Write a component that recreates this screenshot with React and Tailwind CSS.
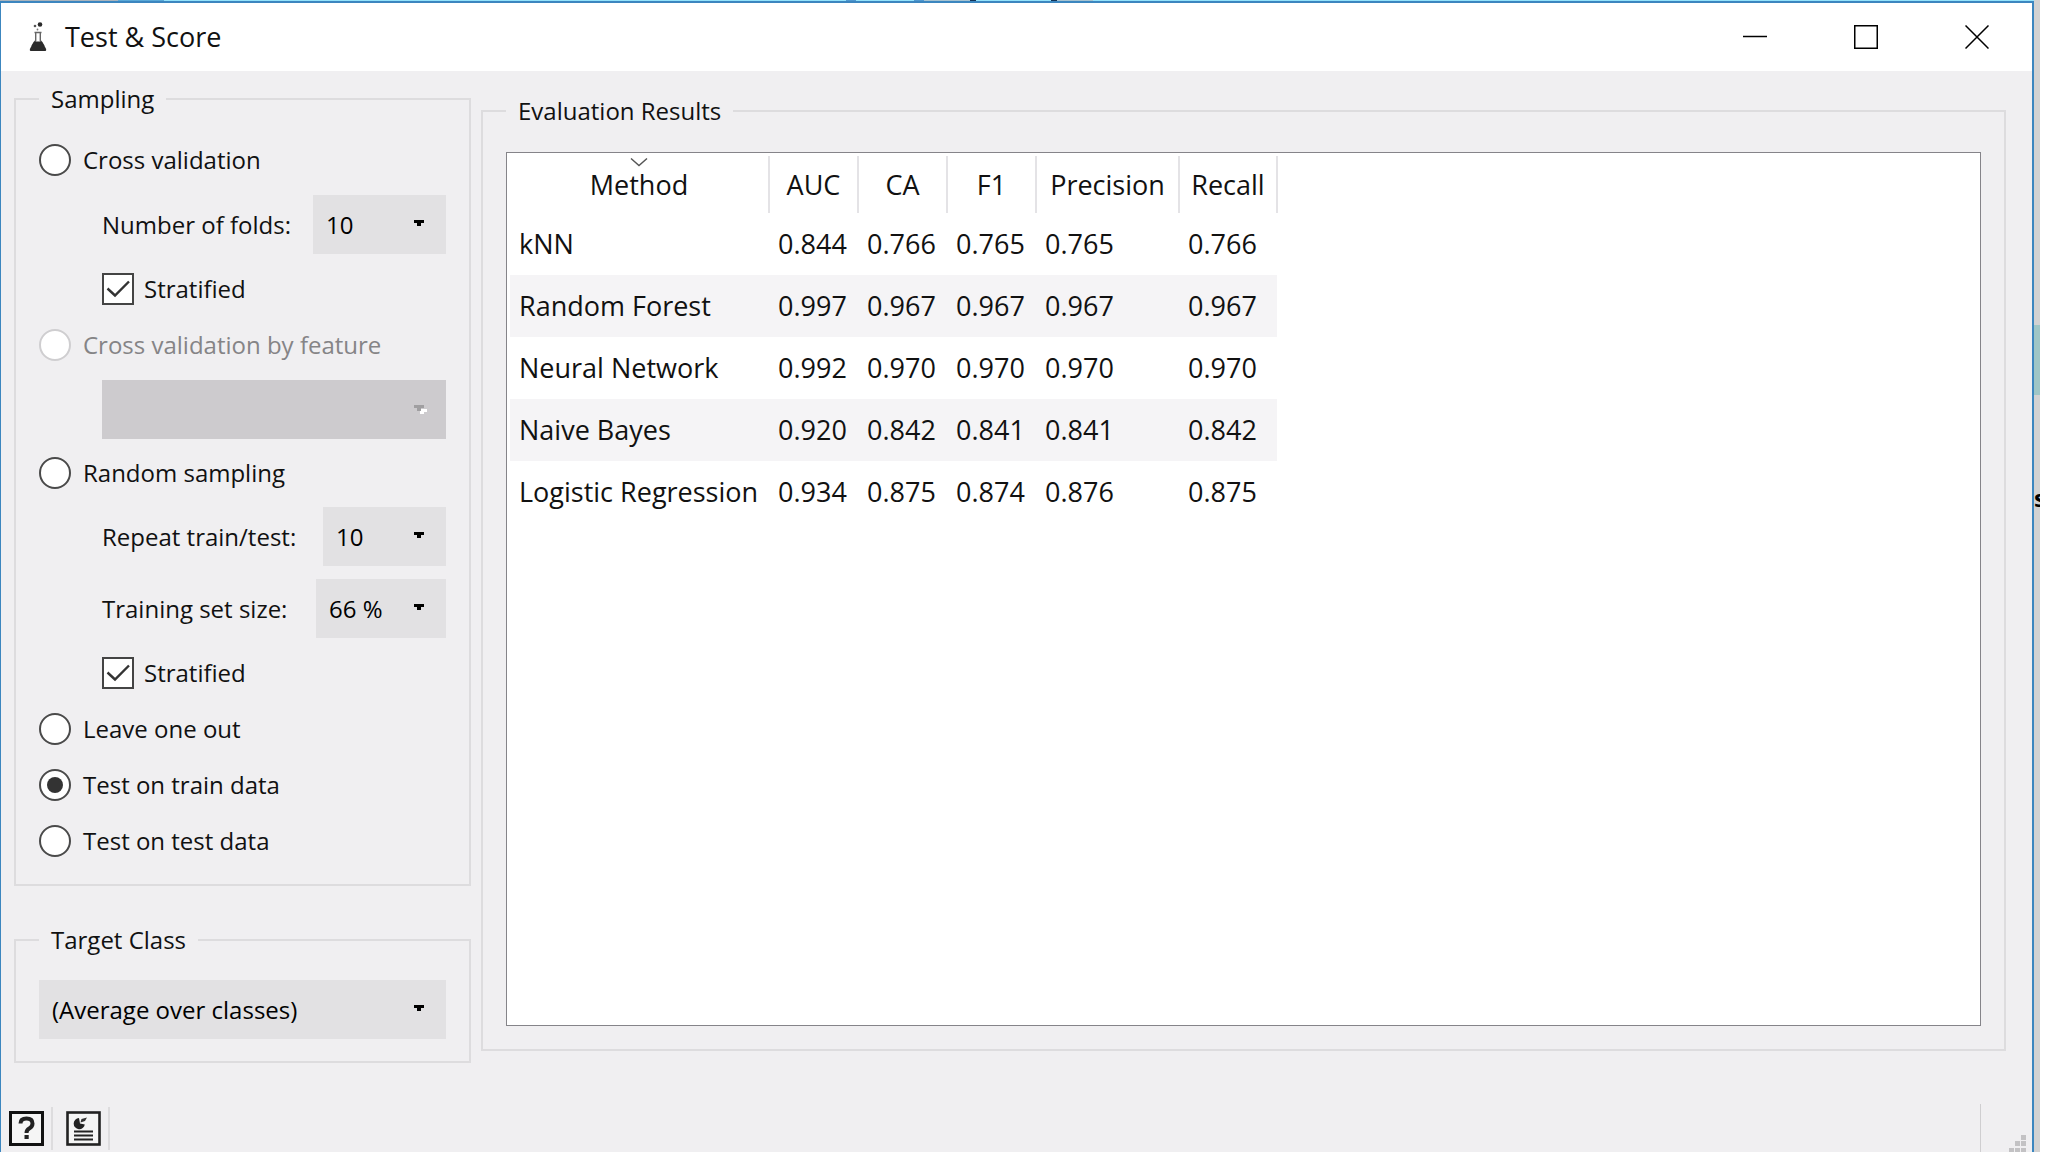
import { useState } from 'react';
import clsx from 'clsx';

const COLUMNS = [
  { key: 'method', label: 'Method', width: 'w-[259px]' },
  { key: 'auc', label: 'AUC', width: 'w-[89px]' },
  { key: 'ca', label: 'CA', width: 'w-[89px]' },
  { key: 'f1', label: 'F1', width: 'w-[89px]' },
  { key: 'precision', label: 'Precision', width: 'w-[143px]' },
  { key: 'recall', label: 'Recall', width: 'w-[98px]' },
];

const RESULTS = [
  { method: 'kNN', auc: '0.844', ca: '0.766', f1: '0.765', precision: '0.765', recall: '0.766' },
  { method: 'Random Forest', auc: '0.997', ca: '0.967', f1: '0.967', precision: '0.967', recall: '0.967' },
  { method: 'Neural Network', auc: '0.992', ca: '0.970', f1: '0.970', precision: '0.970', recall: '0.970' },
  { method: 'Naive Bayes', auc: '0.920', ca: '0.842', f1: '0.841', precision: '0.841', recall: '0.842' },
  { method: 'Logistic Regression', auc: '0.934', ca: '0.875', f1: '0.874', precision: '0.876', recall: '0.875' },
];

// Slice of the desktop that shows above the window
const DESKTOP_EDGE = [
  'w-[118px] bg-[#a9b4bd]',
  'w-[46px] bg-[#5aa9d8]',
  'w-[682px] bg-[#93e2fb]',
  'w-[10px] bg-[#4f97cf]',
  'w-[58px] bg-[#93e2fb]',
  'w-[10px] bg-[#4f97cf]',
  'w-[46px] bg-[#a5c3d2]',
  'w-[6px] bg-[#123458]',
  'w-[75px] bg-[#93e2fb]',
  'w-[6px] bg-[#123458]',
  'w-[36px] bg-[#a5c3d2]',
  'flex-1 bg-[#93e2fb]',
];

function FlaskIcon() {
  return (
    <svg viewBox="0 0 18 30" className="h-[30px] w-[18px]" aria-hidden="true">
      <circle cx="11" cy="2.5" r="2.3" fill="#2b2b2b" />
      <circle cx="6" cy="4" r="1.3" fill="#555" />
      <circle cx="8.5" cy="7.5" r="0.9" fill="#777" />
      <path d="M5.5 10.5h7M6.7 10.5v8L3 24M11.3 10.5v8L15 24" fill="none" stroke="#666" strokeWidth="1.4" />
      <path d="M5 19.5h8l4 7.2q.8 2.3-1.4 2.3H2.4Q.2 29 1 26.7z" fill="#2b2b2b" />
    </svg>
  );
}

function ComboArrow({ disabled }) {
  return (
    <svg
      viewBox="0 0 14 10"
      className="pointer-events-none absolute right-[18px] top-[25px] h-[10px] w-[14px]"
      shapeRendering="crispEdges"
      aria-hidden="true"
    >
      {disabled && <path d="M7 4h6v3h-3v2H6V6h1z" fill="#fff" />}
      <path d="M0 0h10v3H7v3H3V3H0z" fill={disabled ? '#a09fa1' : '#000'} />
    </svg>
  );
}

function Combo({ options, disabled, className, ...props }) {
  return (
    <div className={clsx('relative h-[59px]', className)}>
      <select
        disabled={disabled}
        className="h-full w-full appearance-none overflow-hidden rounded-none bg-[#e2e1e3] pl-[13px] pr-[62px] text-black opacity-100 disabled:bg-[#cdcbce]"
        {...props}
      >
        {options.map((option) => (
          <option key={option}>{option}</option>
        ))}
      </select>
      <ComboArrow disabled={disabled} />
    </div>
  );
}

function Radio({ value, selected, onSelect, disabled, className, children }) {
  return (
    <label className={clsx('flex h-8 items-center gap-3', disabled && 'text-[#858486]', className)}>
      <input
        type="radio"
        name="resampling"
        value={value}
        checked={selected === value}
        onChange={() => onSelect(value)}
        disabled={disabled}
        className="grid size-8 shrink-0 appearance-none place-content-center rounded-full border-2 border-[#4a4a4a] bg-white checked:before:size-4 checked:before:rounded-full checked:before:bg-[#333] disabled:border-[#cfced0]"
      />
      {children}
    </label>
  );
}

function Checkbox({ children }) {
  return (
    <label className="mt-[19px] ml-[63px] flex h-8 items-center gap-[10px]">
      <span className="relative size-8 shrink-0">
        <input
          type="checkbox"
          defaultChecked
          className="peer block size-8 appearance-none border-2 border-[#444] bg-white"
        />
        <svg
          viewBox="0 0 32 32"
          className="pointer-events-none absolute inset-0 hidden size-8 peer-checked:block"
          aria-hidden="true"
        >
          <path d="M5.5 15.5l7.5 7L27 8.5" fill="none" stroke="#333" strokeWidth="2.4" />
        </svg>
      </span>
      {children}
    </label>
  );
}

function GroupBox({ title, className, children }) {
  return (
    <fieldset className={clsx('min-w-0 border-2 border-[#dddcde] px-[23px]', className)}>
      <legend className="px-3 leading-8">{title}</legend>
      {children}
    </fieldset>
  );
}

function SamplingBox() {
  const [sampling, setSampling] = useState('train');

  return (
    <GroupBox title="Sampling" className="pb-[27px]">
      <Radio value="cv" selected={sampling} onSelect={setSampling} className="mt-[29px]">
        Cross validation
      </Radio>
      <div className="mt-[19px] ml-[63px] flex items-center justify-between">
        <label htmlFor="folds">Number of folds:</label>
        <Combo id="folds" options={['10']} className="w-[133px]" />
      </div>
      <Checkbox>Stratified</Checkbox>

      <Radio value="feature" selected={sampling} onSelect={setSampling} disabled className="mt-6">
        Cross validation by feature
      </Radio>
      <Combo options={['']} disabled aria-label="Feature" className="mt-[19px] ml-[63px]" />

      <Radio value="random" selected={sampling} onSelect={setSampling} className="mt-[18px]">
        Random sampling
      </Radio>
      <div className="mt-[18px] ml-[63px] flex items-center justify-between">
        <label htmlFor="repeat">Repeat train/test:</label>
        <Combo id="repeat" options={['10']} className="w-[123px]" />
      </div>
      <div className="mt-[13px] ml-[63px] flex items-center justify-between">
        <label htmlFor="size">Training set size:</label>
        <Combo id="size" options={['66 %']} className="w-[130px]" />
      </div>
      <Checkbox>Stratified</Checkbox>

      <Radio value="loo" selected={sampling} onSelect={setSampling} className="mt-6">
        Leave one out
      </Radio>
      <Radio value="train" selected={sampling} onSelect={setSampling} className="mt-6">
        Test on train data
      </Radio>
      <Radio value="test" selected={sampling} onSelect={setSampling} className="mt-6">
        Test on test data
      </Radio>
    </GroupBox>
  );
}

function ResultsTable() {
  return (
    <table className="table-fixed border-collapse text-[27px] text-[#111]">
      <thead>
        <tr className="h-[57px]">
          {COLUMNS.map(({ key, label, width }) => (
            <th key={key} scope="col" className={clsx('relative border-r-2 border-[#e4e3e6] p-0 font-normal', width)}>
              {key === 'method' && (
                <svg
                  viewBox="0 0 18 9"
                  className="absolute left-1/2 top-[2px] h-[9px] w-[18px] -translate-x-1/2"
                  aria-hidden="true"
                >
                  <path d="M1 .5l8 7 8-7" fill="none" stroke="#555" strokeWidth="1.4" />
                </svg>
              )}
              {label}
            </th>
          ))}
        </tr>
      </thead>
      <tbody>
        {RESULTS.map((row) => (
          <tr key={row.method} className="h-[62px] even:bg-[#f5f4f6]">
            {COLUMNS.map(({ key }) => (
              <td key={key} className="whitespace-nowrap p-0 pl-[9px]">
                {row[key]}
              </td>
            ))}
          </tr>
        ))}
      </tbody>
    </table>
  );
}

function TitleBar() {
  return (
    <header className="flex h-[68px] items-stretch bg-white">
      <div className="flex flex-1 items-center gap-[18px] pl-7">
        <FlaskIcon />
        <h1 className="text-[27px]">Test &amp; Score</h1>
      </div>
      <button aria-label="Minimize" className="grid w-[111px] place-items-center">
        <svg viewBox="0 0 24 24" className="size-6">
          <path d="M0 11.5h24" stroke="#000" strokeWidth="1.5" />
        </svg>
      </button>
      <button aria-label="Maximize" className="grid w-[111px] place-items-center">
        <svg viewBox="0 0 24 24" className="size-6">
          <path d="M.75.75h22.5v22.5H.75z" fill="none" stroke="#000" strokeWidth="1.5" />
        </svg>
      </button>
      <button aria-label="Close" className="grid w-[111px] place-items-center">
        <svg viewBox="0 0 24 24" className="size-6">
          <path d="M.5.5l23 23M23.5.5l-23 23" stroke="#000" strokeWidth="1.5" />
        </svg>
      </button>
    </header>
  );
}

function StatusBar() {
  return (
    <footer className="flex h-[50px] items-center">
      <button aria-label="Help" className="ml-2 size-[35px]">
        <svg viewBox="0 0 35 35" className="size-full">
          <rect x="1.5" y="1.5" width="32" height="32" fill="#f5f5f5" stroke="#111" strokeWidth="3" />
          <path d="M11.5 12.5q0-5 6-5t6 5q0 3-3 4.8-3 1.7-3 4.7" fill="none" stroke="#222" strokeWidth="4" />
          <path d="M15.5 24h4.2v4h-4.2z" fill="#222" />
        </svg>
      </button>
      <span className="ml-[7px] h-[43px] w-[2px] bg-[#dddcde]" />
      <button aria-label="Report" className="ml-[13px] size-[35px]">
        <svg viewBox="0 0 35 35" className="size-full">
          <rect x="1.5" y="1.5" width="32" height="32" fill="#f5f5f5" stroke="#222" strokeWidth="2.6" />
          <path d="M13 7a5.600 5.600 0 1 0 5.800 6.500l-4.800-1z" fill="#222" />
          <path d="M14.500 11.500l1-3.500 5.500-1.500-2 3.500z" fill="#333" />
          <path d="M8 20.500h19M8 24.500h19M8 28.500h19" stroke="#222" strokeWidth="2" />
        </svg>
      </button>
      <span className="ml-[7px] h-[43px] w-[2px] bg-[#dddcde]" />
      <span className="ml-auto mr-[27px] h-12 w-[1px] bg-[#cfced0]" />
      <svg viewBox="0 0 18 18" className="mr-[6px] size-[18px] self-end" aria-hidden="true">
        <path d="M13 0h5v5h-5zM7 6h5v5H7zM13 6h5v5h-5zM1 13h5v5H1zM7 13h5v5H7zM13 13h5v5h-5z" fill="#c3c2c4" />
      </svg>
    </footer>
  );
}

export default function App() {
  return (
    <div className="flex min-h-screen bg-white font-['Open_Sans',sans-serif] text-[24px] leading-8 text-[#111]">
      <div className="flex min-w-0 flex-1 flex-col">
        <div className="flex h-px">
          {DESKTOP_EDGE.map((segment, idx) => (
            <span key={idx} className={segment} />
          ))}
        </div>

        <div className="flex flex-1 flex-col border-t-2 border-r-2 border-l border-[#3c86bf] bg-[#f0eff1]">
          <TitleBar />

          <main className="flex flex-1 gap-[10px] pt-[12px] pr-[26px] pb-10 pl-[13px]">
            <div className="flex w-[457px] shrink-0 flex-col gap-[38px]">
              <SamplingBox />
              <GroupBox title="Target Class" className="pb-[22px]">
                <Combo options={['(Average over classes)']} aria-label="Target class" className="mt-6" />
              </GroupBox>
            </div>
            <GroupBox title="Evaluation Results" className="mt-3 mb-3 flex flex-1 flex-col pb-[23px]">
              <div className="mt-[25px] flex-1 border border-[#858489] bg-white p-[3px]">
                <ResultsTable />
              </div>
            </GroupBox>
          </main>

          <StatusBar />
        </div>
      </div>

      {/* Window shadow with the desktop showing through */}
      <div className="w-[14px] shrink-0" aria-hidden="true">
        <div className="flex h-full w-[6px] flex-col overflow-hidden bg-[#d2d2d2]">
          <div className="mt-[325px] h-[70px] bg-[#9fc6c6]" />
          <span className="mt-[87px] font-bold text-black">s</span>
        </div>
      </div>
    </div>
  );
}
